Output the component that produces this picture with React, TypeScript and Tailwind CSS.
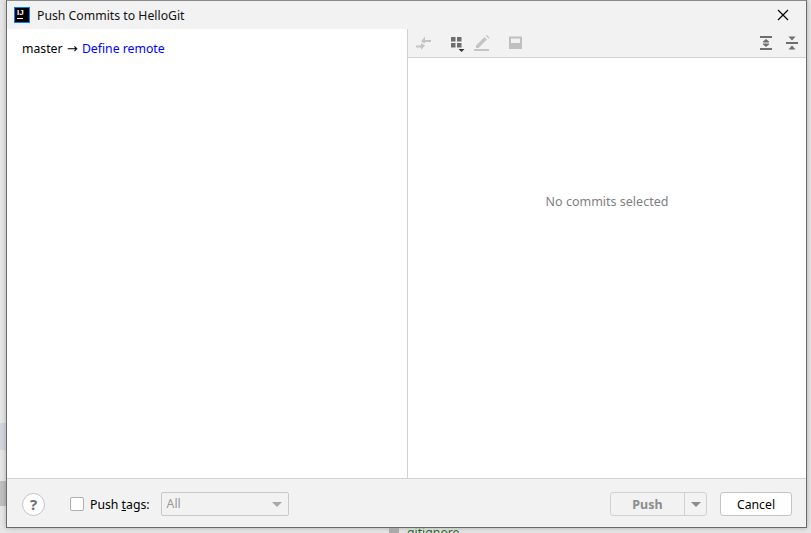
const font = "font-['Noto_Sans','Open_Sans',sans-serif]";

const Logo = () => (
  <div className="flex h-4 w-4 shrink-0 flex-col border border-[#087cfa] bg-black px-[2px] pt-[1px] font-['Liberation_Sans',sans-serif]">
    <span className="text-[8px] font-bold leading-[8px] text-white">IJ</span>
    <span className="mt-[1px] h-px w-[6px] bg-white" />
  </div>
);

const Divider = () => <span className="h-[18px] w-px shrink-0 bg-[#d1d1d1]" />;

const Toolbar = () => (
  <div className="flex h-[29px] shrink-0 items-center border-b border-[#d1d1d1] bg-[#f2f2f2] pb-[1px] pl-[5px] pr-[4px]">
    <svg width="20" height="20" viewBox="0 0 20 20" className="text-[#c4c4c4]">
      <path d="M12 3.500V7h6v2h-6v1.500L8 8.500z" fill="currentColor" />
      <path d="M8 10v2.500H3v2h5V17l4-4.500z" fill="currentColor" />
    </svg>
    <span className="ml-[6px]">
      <Divider />
    </span>
    <svg width="20" height="20" viewBox="0 0 20 20" className="ml-[9px] text-[#6e6e6e]">
      <path d="M3 4h4.500v4.500H3zM9 4h4.500v4.500H9zM3 10h4.500v4.500H3zM9 10h4.500v4.500H9z" fill="currentColor" />
      <path d="M10.500 16h6l-3 3z" fill="#333" />
    </svg>
    <svg width="20" height="20" viewBox="0 0 20 20" className="ml-[4px] text-[#c4c4c4]">
      <path d="M4 12.500 12.500 4l2.500 2.500L6.500 15H4zM14 3l1-1 2.500 2.500-1 1z" fill="currentColor" />
      <path d="M2 16h15v2H2z" fill="currentColor" />
    </svg>
    <span className="ml-[5px]">
      <Divider />
    </span>
    <svg width="20" height="20" viewBox="0 0 20 20" className="ml-[8px] text-[#c0c0c0]">
      <path d="M4 3.500h13v12.500H4zM6 5.500v4.500h9V5.500z" fillRule="evenodd" fill="currentColor" />
    </svg>
    <div className="ml-auto flex items-center gap-[6px]">
      <svg width="20" height="20" viewBox="0 0 20 20" className="text-[#6e6e6e]">
        <path d="M4 3h12v2H4zM4 15h12v2H4zM10 6l3.500 3h-7zM6.500 11h7L10 14z" fill="currentColor" />
        <path d="M7 9.500h6v1H7z" fill="currentColor" />
      </svg>
      <svg width="20" height="20" viewBox="0 0 20 20" className="text-[#6e6e6e]">
        <path d="M4 9h12v2H4zM6.500 3.500h7L10 7.500zM10 12.500l3.500 4h-7z" fill="currentColor" />
      </svg>
    </div>
  </div>
);

const Footer = () => (
  <div className="flex h-[49px] shrink-0 items-center border-t border-[#d1d1d1] bg-[#f2f2f2] pl-[15px] pr-[14px] pt-[2px]">
    <div className="flex h-[23px] w-[23px] items-center justify-center rounded-full border border-[#c4c4c4] bg-white text-[15px] font-bold text-[#6e6e6e]">
      ?
    </div>
    <div className="ml-[25px] h-[14px] w-[14px] rounded-[2px] border border-[#b0b0b0] bg-white" />
    <span className="ml-[6px] pt-[2px] text-[12.25px] text-black">
      Push <span className="underline">t</span>ags:
    </span>
    <div className="ml-[11px] flex h-6 w-[128px] items-center justify-between rounded-[2px] border border-[#c9c9c9] bg-[#f2f2f2] pl-[5px] pr-[6px] text-[12.25px] text-[#999]">
      All
      <span className="h-0 w-0 border-x-[5px] border-t-[5px] border-x-transparent border-t-[#a8a8a8]" />
    </div>
    <div className="ml-auto flex h-6 w-[97px] rounded-[3px] border border-[#d1d1d1] bg-[#f2f2f2]">
      <span className="flex flex-1 items-center justify-center border-r border-[#d1d1d1] pt-[2px] text-[12.5px] font-bold text-[#8c8c8c]">
        Push
      </span>
      <span className="flex w-[21px] items-center justify-center">
        <span className="h-0 w-0 border-x-[5px] border-t-[5px] border-x-transparent border-t-[#8c8c8c]" />
      </span>
    </div>
    <button className="ml-[13px] flex h-6 w-[72px] items-center justify-center rounded-[3px] border border-[#c4c4c4] bg-white pt-[2px] text-[12.25px] text-black">
      Cancel
    </button>
  </div>
);

const App = () => {
  return (
    <div className={`flex h-[533px] w-[811px] overflow-hidden bg-[#e6e6e6] ${font}`}>
      <div className="flex w-[6px] shrink-0 flex-col">
        <div className="h-[423px]" />
        <div className="h-[27px] bg-[#d3d6db]" />
        <div className="h-[31px] bg-[#e6e6e6]" />
        <div className="h-[25px] bg-[#bfbfbf]" />
      </div>
      <div className="flex w-[801px] shrink-0 flex-col">
        <div className="flex h-[528px] shrink-0 flex-col border border-[#6b6b6b] border-t-[#8a8a8a] bg-white shadow-[0_0_5px_rgba(0,0,0,0.25)]">
          <div className="flex h-[28px] shrink-0 items-center bg-[#f2f2f2] pl-[7px] pr-[17px]">
            <Logo />
            <span className="ml-[7px] pt-[2px] text-[12.25px] text-[#111]">Push Commits to HelloGit</span>
            <svg width="12" height="12" viewBox="0 0 12 12" className="ml-auto text-black">
              <path d="M1 1l10 10M11 1 1 11" stroke="currentColor" strokeWidth="1.2" fill="none" />
            </svg>
          </div>
          <div className="flex min-h-0 flex-1">
            <div className="w-[401px] shrink-0 border-r border-[#d1d1d1] pl-[15px] pt-[10px] text-[12.25px] text-black">
              master <span className="mx-[1px] font-['DejaVu_Sans',sans-serif] text-[13px]">→</span>{" "}
              <span className="text-[#0000ff]">Define remote</span>
            </div>
            <div className="flex flex-1 flex-col">
              <Toolbar />
              <div className="flex flex-1 justify-center pt-[135px] text-[12.5px] text-[#7f7f7f]">
                No commits selected
              </div>
            </div>
          </div>
          <Footer />
        </div>
        <div className="flex h-[5px] items-start overflow-hidden pl-[383px]">
          <span className="h-[5px] w-[10px] bg-[#a9a9a9]" />
          <span className="ml-[8px] text-[12.25px] leading-[9px] text-[#1d6b1d]">gitignore</span>
        </div>
      </div>
    </div>
  );
};

export default App;
